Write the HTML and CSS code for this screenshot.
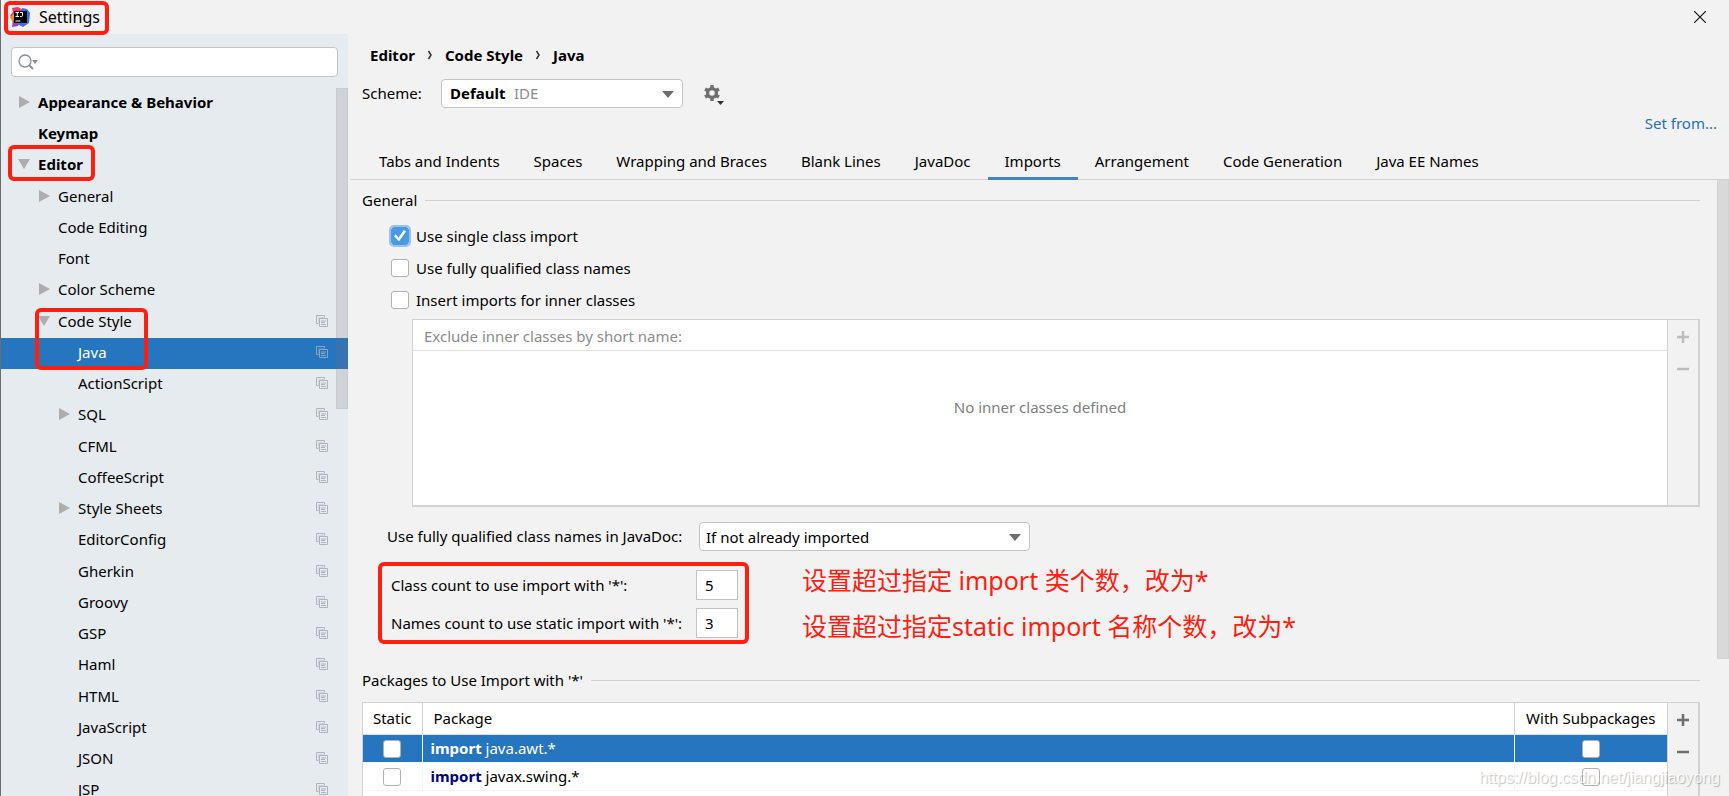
FILE: index.html
```html
<!DOCTYPE html>
<html lang="en">
<head>
<meta charset="utf-8">
<title>Settings</title>
<link rel="stylesheet" href="styles.css">
</head>
<body>
<svg class="defs" aria-hidden="true">
  <symbol id="copy" viewBox="0 0 12 12">
    <path d="M.5 8.500V.5h8v1.500M.5 8.500h2" fill="none" stroke="currentColor"/>
    <path d="M2 2h7v1H4v5H2z" fill="currentColor" opacity=".4"/>
    <path d="M3.500 3.500h8v8h-8z" fill="none" stroke="currentColor"/>
    <path d="M5 6h5M5 7.500h4M5 9.500h5" fill="none" stroke="currentColor"/>
  </symbol>
  <symbol id="right" viewBox="0 0 12 12"><path d="M1 0v12l11-6z" fill="currentColor"/></symbol>
  <symbol id="down" viewBox="0 0 12 12"><path d="M0 1h12L6 11z" fill="currentColor"/></symbol>
  <symbol id="plus" viewBox="0 0 14 14"><path d="M7 1v12M1 7h12" stroke="currentColor" stroke-width="2.500"/></symbol>
  <symbol id="minus" viewBox="0 0 14 14"><path d="M1 7h12" stroke="currentColor" stroke-width="2.500"/></symbol>
  <symbol id="crumb" viewBox="0 0 6 10"><path d="M1.500 1l2.500 4-2.500 4" fill="none" stroke="currentColor" stroke-width="1.500"/></symbol>
</svg>

<header class="titlebar">
  <div class="title">
    <svg class="logo" viewBox="0 0 20 20" aria-hidden="true">
      <path d="M2 1l6-1 5 3-7 9-6-3 3-4z" fill="#f5335c"/>
      <path d="M0 10l4-3 3 7-4 2z" fill="#f6891f"/>
      <path d="M12 1l5 1 3 4-1 10-6 4-6-3z" fill="#2f72ee"/>
      <path d="M3 13l6 3-1 3-6 1z" fill="#9a3fc4"/>
      <path d="M4 4h13v12H4z" fill="#000"/>
      <path d="M5.500 5.500h3.500M7.250 5.500v4M5.500 9.500h3.500M10 5.500h2.500v3q0 1-1 1H10M5.500 14h5" fill="none" stroke="#fff" stroke-width="1"/>
    </svg>
    <h1 class="title-text">Settings</h1>
    <span class="mark mark-title"></span>
  </div>
  <button class="close" aria-label="Close"><svg viewBox="0 0 12 12"><path d="M0 0l12 12M12 0L0 12" stroke="#111" stroke-width="1.200"/></svg></button>
</header>

<div class="window">
  <aside class="sidebar">
    <div class="search">
      <svg class="search-icon" viewBox="0 0 21 16" aria-hidden="true"><circle cx="7" cy="7" r="6" fill="none" stroke="#87919a" stroke-width="1.300"/><path d="M11 11l4 4" stroke="#87919a" stroke-width="2"/><path d="M14 6h6l-3 4z" fill="#87919a"/></svg>
      <input class="search-input" type="text" aria-label="Search settings">
    </div>
    <nav class="tree-wrap">
      <ul class="tree">
        <li class="row top"><svg class="twist"><use href="#right"/></svg><a href="#">Appearance &amp; Behavior</a></li>
        <li class="row top"><span class="twist"></span><a href="#">Keymap</a></li>
        <li class="row top"><svg class="twist"><use href="#down"/></svg><a href="#">Editor</a><span class="mark mark-editor"></span></li>
        <li class="row l1"><svg class="twist"><use href="#right"/></svg><a href="#">General</a></li>
        <li class="row l1"><span class="twist"></span><a href="#">Code Editing</a></li>
        <li class="row l1"><span class="twist"></span><a href="#">Font</a></li>
        <li class="row l1"><svg class="twist"><use href="#right"/></svg><a href="#">Color Scheme</a></li>
        <li class="row l1"><svg class="twist"><use href="#down"/></svg><a href="#">Code Style</a><svg class="copy"><use href="#copy"/></svg><span class="mark mark-style"></span></li>
        <li class="row l2 selected"><span class="twist"></span><a href="#" aria-current="page">Java</a><svg class="copy"><use href="#copy"/></svg></li>
        <li class="row l2"><span class="twist"></span><a href="#">ActionScript</a><svg class="copy"><use href="#copy"/></svg></li>
        <li class="row l2"><svg class="twist"><use href="#right"/></svg><a href="#">SQL</a><svg class="copy"><use href="#copy"/></svg></li>
        <li class="row l2"><span class="twist"></span><a href="#">CFML</a><svg class="copy"><use href="#copy"/></svg></li>
        <li class="row l2"><span class="twist"></span><a href="#">CoffeeScript</a><svg class="copy"><use href="#copy"/></svg></li>
        <li class="row l2"><svg class="twist"><use href="#right"/></svg><a href="#">Style Sheets</a><svg class="copy"><use href="#copy"/></svg></li>
        <li class="row l2"><span class="twist"></span><a href="#">EditorConfig</a><svg class="copy"><use href="#copy"/></svg></li>
        <li class="row l2"><span class="twist"></span><a href="#">Gherkin</a><svg class="copy"><use href="#copy"/></svg></li>
        <li class="row l2"><span class="twist"></span><a href="#">Groovy</a><svg class="copy"><use href="#copy"/></svg></li>
        <li class="row l2"><span class="twist"></span><a href="#">GSP</a><svg class="copy"><use href="#copy"/></svg></li>
        <li class="row l2"><span class="twist"></span><a href="#">Haml</a><svg class="copy"><use href="#copy"/></svg></li>
        <li class="row l2"><span class="twist"></span><a href="#">HTML</a><svg class="copy"><use href="#copy"/></svg></li>
        <li class="row l2"><span class="twist"></span><a href="#">JavaScript</a><svg class="copy"><use href="#copy"/></svg></li>
        <li class="row l2"><span class="twist"></span><a href="#">JSON</a><svg class="copy"><use href="#copy"/></svg></li>
        <li class="row l2"><span class="twist"></span><a href="#">JSP</a><svg class="copy"><use href="#copy"/></svg></li>
      </ul>
      <span class="tree-scroll"></span>
    </nav>
  </aside>

  <main class="main">
    <nav class="crumbs">
      <a href="#">Editor</a><svg class="crumb"><use href="#crumb"/></svg><a href="#">Code Style</a><svg class="crumb"><use href="#crumb"/></svg><a href="#">Java</a>
    </nav>
    <div class="scheme">
      <label class="scheme-label" for="scheme">Scheme:</label>
      <div class="combo combo-scheme">
        <select id="scheme"><option>Default</option></select>
        <span class="combo-hint">IDE</span>
        <svg class="combo-arrow" viewBox="0 0 12 7"><path d="M0 0h12L6 7z" fill="#6e6e6e"/></svg>
      </div>
      <button class="gear" aria-label="Scheme actions">
        <svg viewBox="0 0 21 21"><g fill="#6e6e6e"><path d="M6.300 0h3.400v16H6.300z"/><path d="M6.300 0h3.400v16H6.300z" transform="rotate(60 8 8)"/><path d="M6.300 0h3.400v16H6.300z" transform="rotate(120 8 8)"/><circle cx="8" cy="8" r="6"/></g><circle cx="8" cy="8" r="2.800" fill="#f2f2f2"/><path d="M13 16h7l-3.500 4z" fill="#333"/></svg>
      </button>
    </div>
    <div class="setfrom"><a href="#">Set from...</a></div>
    <div class="tabs" role="tablist">
      <button class="tab" role="tab">Tabs and Indents</button>
      <button class="tab" role="tab">Spaces</button>
      <button class="tab" role="tab">Wrapping and Braces</button>
      <button class="tab" role="tab">Blank Lines</button>
      <button class="tab" role="tab">JavaDoc</button>
      <button class="tab active" role="tab" aria-selected="true">Imports</button>
      <button class="tab" role="tab">Arrangement</button>
      <button class="tab" role="tab">Code Generation</button>
      <button class="tab" role="tab">Java EE Names</button>
    </div>

    <div class="scroller">
      <div class="pane">
        <h2 class="section">General</h2>
        <div class="checks">
          <label class="check"><input type="checkbox" class="box focus" checked>Use single class import</label>
          <label class="check"><input type="checkbox" class="box">Use fully qualified class names</label>
          <label class="check"><input type="checkbox" class="box">Insert imports for inner classes</label>
        </div>
        <div class="list inner">
          <div class="list-body">
            <div class="list-head">Exclude inner classes by short name:</div>
            <div class="list-empty">No inner classes defined</div>
          </div>
          <div class="tools disabled">
            <button aria-label="Add class" disabled><svg><use href="#plus"/></svg></button>
            <button aria-label="Remove class" disabled><svg><use href="#minus"/></svg></button>
          </div>
        </div>
        <div class="javadoc">
          <label for="javadoc">Use fully qualified class names in JavaDoc:</label>
          <div class="combo combo-javadoc">
            <select id="javadoc"><option>If not already imported</option></select>
            <svg class="combo-arrow" viewBox="0 0 12 7"><path d="M0 0h12L6 7z" fill="#6e6e6e"/></svg>
          </div>
        </div>
        <div class="counts">
          <div class="counts-box">
            <label for="cls">Class count to use import with '*':</label><input id="cls" class="num" type="text" value="5">
            <label for="names">Names count to use static import with '*':</label><input id="names" class="num" type="text" value="3">
          </div>
          <div class="notes" lang="zh-CN">
            <p>设置超过指定 import 类个数，改为*</p>
            <p>设置超过指定static import 名称个数，改为*</p>
          </div>
        </div>
        <h2 class="section">Packages to Use Import with '*'</h2>
        <div class="list packages">
          <table class="table">
            <thead><tr><th class="c-static">Static</th><th class="c-pack">Package</th><th class="c-sub">With Subpackages</th></tr></thead>
            <tbody>
              <tr class="on"><td class="c-static"><input type="checkbox" class="box" aria-label="Static java.awt"></td><td class="c-pack"><b>import</b> java.awt.*</td><td class="c-sub"><input type="checkbox" class="box" aria-label="With subpackages java.awt"></td></tr>
              <tr><td class="c-static"><input type="checkbox" class="box" aria-label="Static javax.swing"></td><td class="c-pack"><b>import</b> javax.swing.*</td><td class="c-sub"><input type="checkbox" class="box" aria-label="With subpackages javax.swing"></td></tr>
            </tbody>
          </table>
          <div class="tools">
            <button aria-label="Add package"><svg><use href="#plus"/></svg></button>
            <button aria-label="Remove package"><svg><use href="#minus"/></svg></button>
          </div>
        </div>
      </div>
      <span class="main-scroll"></span>
    </div>
  </main>
</div>
<div class="watermark">https://blog.csdn.net/jiangjiaoyong</div>
</body>
</html>
```
FILE: styles.css
```css
* { box-sizing: border-box; }
body {
  margin: 0;
  height: 100vh;
  overflow: hidden;
  display: flex;
  flex-direction: column;
  background: #f2f2f2;
  border-left: 1px solid #6d6d6d;
  color: #000;
  font: 15px/20px "Noto Sans", "Noto Sans CJK SC", sans-serif;
}
button, input, select { font: inherit; color: inherit; }
button { background: none; border: 0; padding: 0; }
a { color: inherit; text-decoration: none; }
.defs { position: absolute; width: 0; height: 0; }

.mark { position: absolute; border: 4px solid #ff1e10; border-radius: 6px; pointer-events: none; z-index: 2; }

/* title bar */
.titlebar { flex: none; height: 34px; display: flex; align-items: center; justify-content: space-between; padding: 0 22px 0 9px; }
.title { position: relative; display: flex; align-items: center; gap: 9px; }
.title-text { margin: 0; font-size: 16px; font-weight: 400; line-height: 20px; }
.logo { width: 20px; height: 20px; }
.mark-title { inset: -6px -9px -8px -6px; }
.close { width: 14px; height: 14px; display: flex; align-items: center; justify-content: center; }
.close svg { width: 12px; height: 12px; }

.window { flex: 1; min-height: 0; display: flex; }

/* sidebar */
.sidebar { flex: none; width: 347px; background: #e6ebef; display: flex; flex-direction: column; padding-top: 13px; }
.search { flex: none; position: relative; height: 30px; margin: 0 10px 11px; }
.search-input { width: 100%; height: 100%; border: 1px solid #c4c4c4; border-radius: 4px; background: #fff; padding: 0 8px 0 32px; }
.search-icon { position: absolute; left: 7px; top: 7px; width: 21px; height: 16px; }
.tree-wrap { position: relative; flex: 1; min-height: 0; overflow: hidden; }
.tree { list-style: none; margin: 0; padding: 0; }
.row { position: relative; display: flex; align-items: center; height: 31px; padding: 0 20px 3px 17px; }
.row:nth-child(4n) { height: 32px; }
.row a { flex: 1; }
.top a { font-weight: 700; }
.l1 { padding-left: 37px; }
.l2 { padding-left: 57px; }
.twist { width: 12px; height: 12px; margin-right: 8px; color: #adadad; }
.copy { width: 12px; height: 12px; color: #a9b6bf; }
.selected { background: #2675bf; color: #fff; }
.selected .copy { color: #8aa5bf; }
.mark-editor { left: 7px; top: -5px; width: 87px; height: 36px; }
.mark-style { left: 34px; top: 2px; width: 113px; height: 62px; }
.tree-scroll { position: absolute; right: 0; top: 0; width: 12px; height: 321px; background: rgba(115, 115, 125, .2); border: 1px solid rgba(115, 115, 125, .08); }

/* main column */
.main { flex: 1; min-width: 0; display: flex; flex-direction: column; }
.crumbs { display: flex; align-items: center; gap: 12px; padding: 11px 22px 0; font-weight: 700; }
.crumb { width: 6px; height: 10px; color: #333; }
.scheme { display: flex; align-items: center; padding: 14px 14px 0; }
.scheme-label { width: 79px; padding-bottom: 2px; }
.combo { position: relative; height: 29px; }
.combo select { appearance: none; width: 100%; height: 100%; border: 1px solid #c4c4c4; border-radius: 4px; background: #fff; padding: 0 30px 1px 8px; }
.combo-arrow { position: absolute; right: 9px; top: 12px; width: 12px; height: 7px; pointer-events: none; }
.combo-scheme { width: 242px; }
.combo-scheme select { font-weight: 700; }
.combo-hint { position: absolute; left: 73px; top: 4px; color: #8c8c8c; pointer-events: none; }
.gear { width: 21px; height: 21px; margin: 4px 0 0 21px; }
.gear svg { display: block; }
.setfrom { display: flex; justify-content: flex-end; padding: 5px 12px 0; color: #2470b3; }
.tabs { display: flex; margin-left: 2px; padding: 14px 0 0 12px; border-bottom: 1px solid #d1d1d1; }
.tab { height: 33px; margin-bottom: -1px; padding: 0 17px 2px; border-bottom: 3px solid transparent; white-space: nowrap; }
.active { border-bottom-color: #4083c9; }

.scroller { flex: 1; min-height: 0; display: flex; align-items: flex-start; overflow: hidden; }
.pane { flex: 1; min-width: 0; padding: 10px 17px 0 14px; }
.main-scroll { flex: none; width: 12px; height: 479px; background: #d9d9d9; border: 1px solid #d1d1d1; border-top: 0; }

.section { display: flex; align-items: center; gap: 8px; margin: 0; font-size: 15px; font-weight: 400; line-height: 20px; }
.section::after { content: ""; flex: 1; height: 1px; background: #d1d1d1; }
.checks { display: grid; row-gap: 12px; padding: 16px 0 0 29px; }
.check { display: flex; align-items: center; gap: 7px; }
.box { appearance: none; flex: none; width: 18px; height: 18px; margin: 0; border: 1px solid #b0b0b0; border-radius: 3px; background: #fff; vertical-align: middle; }
.box:checked { display: grid; place-items: center; background: #4a9ae1; border-color: #4a9ae1; }
.box:checked::before { content: ""; width: 12px; height: 12px; background: #fff; clip-path: polygon(0 52%, 15% 38%, 38% 62%, 82% 0, 100% 12%, 42% 94%); }
.box.focus { outline: 2px solid #97c3f3; outline-offset: 0; }

.list { display: flex; background: #fff; border: 1px solid #d1d1d1; border-right-width: 2px; }
.inner { margin: 9px 0 0 50px; height: 188px; border-bottom-width: 2px; }
.list-body { flex: 1; display: flex; flex-direction: column; }
.list-head { height: 31px; padding: 6px 11px 0; border-bottom: 1px solid #e0e0e0; color: #8c8c8c; }
.list-empty { padding-top: 46px; text-align: center; color: #808080; }
.tools { flex: none; width: 31px; display: flex; flex-direction: column; align-items: center; gap: 18px; padding-top: 10px; background: #f2f2f2; border-left: 1px solid #d1d1d1; color: #6e6e6e; }
.tools button, .tools svg { display: block; width: 14px; height: 14px; }
.disabled { color: #bdbdbd; }

.javadoc { display: flex; align-items: center; justify-content: flex-start; padding: 15px 0 0 25px; }
.javadoc label { width: 312px; padding-bottom: 2px; white-space: nowrap; }
.combo-javadoc { width: 331px; }
.combo-javadoc select { padding: 0 30px 0 6px; }

.counts { display: flex; align-items: flex-start; gap: 53px; padding: 11px 0 0 16px; }
.counts-box { display: grid; grid-template-columns: 1fr 42px; align-items: center; row-gap: 8px; width: 371px; padding: 4px 7px 2px 9px; border: 4px solid #ff1e10; border-radius: 6px; }
.counts-box label { white-space: nowrap; }
.num { width: 42px; height: 30px; padding: 0 8px; border: 1px solid #c4c4c4; background: #fff; }
.notes { display: grid; row-gap: 16px; padding-top: 3px; color: #ff1e10; font-size: 25px; line-height: 30px; }
.notes p { margin: 0; white-space: nowrap; }

.counts + .section { margin-top: 26px; }
.packages { margin-top: 12px; height: 126px; }
.table { flex: 1; align-self: flex-start; border-collapse: collapse; table-layout: fixed; }
.table th, .table td { padding: 0; font-weight: 400; }
.table th { height: 31px; border-bottom: 1px solid #e0e0e0; }
.table td { height: 28px; border-bottom: 1px solid #f5f5f5; }
.table .c-static { width: 59px; text-align: center; }
.table .c-sub { width: 153px; text-align: center; }
.table td.c-pack { text-align: left; padding-left: 8px; }
.table th.c-pack { text-align: left; padding-left: 11px; }
.table .c-pack { border-left: 1px solid #d1d1d1; border-right: 1px solid #d1d1d1; }
.table td.c-pack { border-left-color: #f5f5f5; border-right-color: #f5f5f5; }
.c-pack b { color: #000080; }
.on { background: #2675bf; color: #fff; }
.table .on b { color: #fff; }

.watermark { position: absolute; right: 9px; bottom: 8px; font: 16px/20px "Liberation Sans", sans-serif; color: rgba(255, 255, 255, .8); text-shadow: 1px 1px 1px rgba(0, 0, 0, .25); pointer-events: none; }
```
